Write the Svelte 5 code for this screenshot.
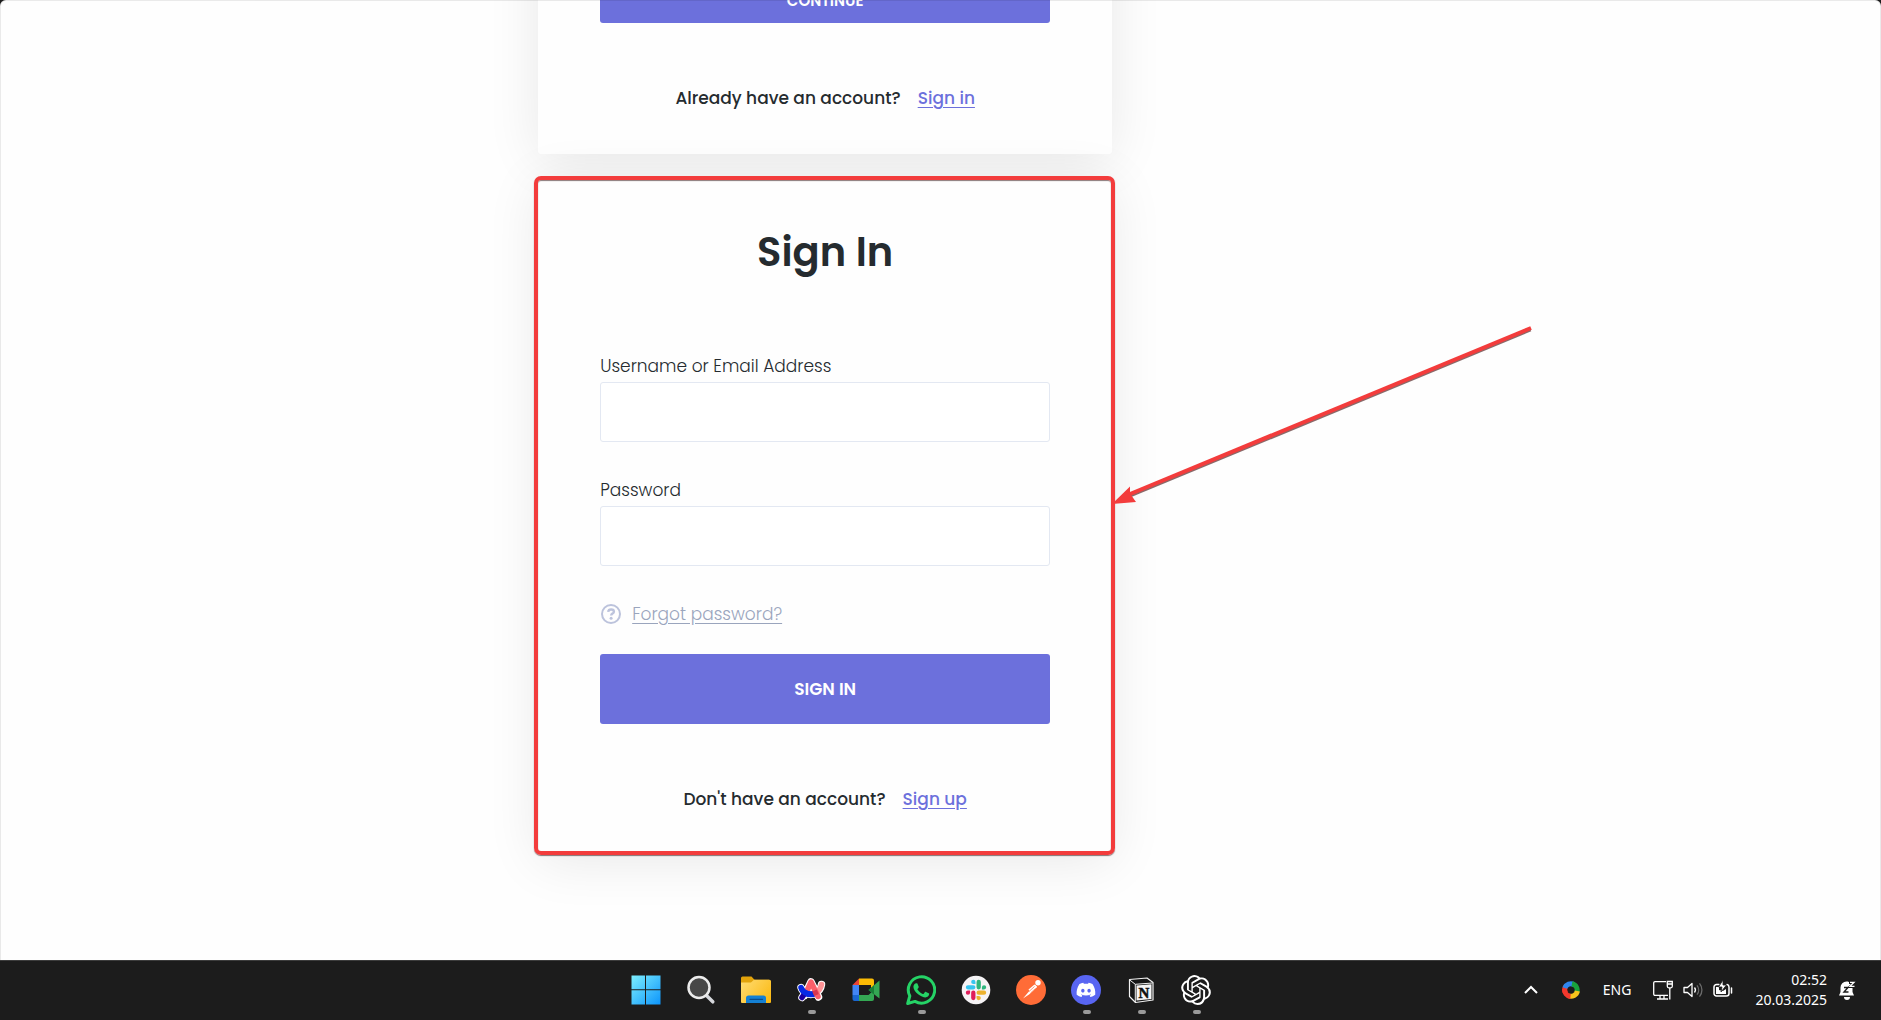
<script>
  let username = $state("");
  let password = $state("");

  const apps = [
    { id: "start", label: "Start", running: false },
    { id: "search", label: "Search", running: false },
    { id: "files", label: "File Explorer", running: false },
    { id: "arc", label: "Arc", running: true },
    { id: "meet", label: "Google Meet", running: false },
    { id: "whatsapp", label: "WhatsApp", running: true },
    { id: "slack", label: "Slack", running: false },
    { id: "postman", label: "Postman", running: false },
    { id: "discord", label: "Discord", running: true },
    { id: "notion", label: "Notion", running: true },
    { id: "chatgpt", label: "ChatGPT", running: true },
  ];

  // Slack logo: one arm, turned four times
  const slackArms = [
    { color: "#e01e5a", turn: 0 },
    { color: "#36c5f0", turn: 90 },
    { color: "#2eb67d", turn: 180 },
    { color: "#ecb22e", turn: 270 },
  ];
</script>

<div class="desktop">
  <main class="page">
    <div class="cards">
      <section class="card">
        <button type="button" class="submit small">Continue</button>
        <p class="switch">
          Already have an account? <a href="#signin">Sign in</a>
        </p>
      </section>

      <section class="card" id="signin">
        <h1>Sign In</h1>
        <form onsubmit={(e) => e.preventDefault()}>
          <div class="field">
            <label for="username">Username or Email Address</label>
            <input id="username" type="text" bind:value={username} />
          </div>
          <div class="field">
            <label for="password">Password</label>
            <input id="password" type="password" bind:value={password} />
          </div>
          <div class="forgot">
            <svg viewBox="0 0 22 22" aria-hidden="true">
              <circle cx="11" cy="11" r="9" fill="none" stroke="#bcc3dc" stroke-width="2" />
              <path d="M8.2 8.8c.2-1.6 1.3-2.3 2.9-2.3 1.7 0 2.8.9 2.8 2.2 0 1.9-2.7 1.9-2.7 3.7" fill="none" stroke="#bcc3dc" stroke-width="2.4" />
              <circle cx="11.1" cy="15.2" r="1.5" fill="#bcc3dc" />
            </svg>
            <a href="#forgot">Forgot password?</a>
          </div>
          <button type="submit" class="submit">Sign in</button>
        </form>
        <p class="switch">
          Don't have an account? <a href="#signup">Sign up</a>
        </p>

        <div class="marker"></div>
        <svg class="arrow" viewBox="0 0 424 184" aria-hidden="true">
          <path d="M418.5 6.500 18 172.500" stroke="#8a6a6a" stroke-width="4" />
          <path d="M419 5 18 171" stroke="#f33c3c" stroke-width="4" />
          <path d="M0 181 18 163.500v7l6 8.500z" fill="#f33c3c" />
        </svg>
      </section>
    </div>
  </main>

  <footer class="taskbar">
    <nav class="apps">
      {#each apps as app}
        <button type="button" class="app" class:running={app.running} aria-label={app.label}>
          <svg viewBox="0 0 30 30">
            {#if app.id === "start"}
              <defs>
                <linearGradient id="win" x1="0" y1="0" x2="30" y2="30" gradientUnits="userSpaceOnUse">
                  <stop offset="0" stop-color="#7ff0fe" />
                  <stop offset="1" stop-color="#0a93fb" />
                </linearGradient>
              </defs>
              <path d="M.5.5H14v13.800H.5zM15 .5h14.500v13.800H15zM.5 15.300H14v14.200H.5zM15 15.300h14.500v14.200H15z" fill="url(#win)" />
            {:else if app.id === "search"}
              <path d="m20.500 20.500 6.300 6.300" stroke="#d6d8dc" stroke-width="3.500" stroke-linecap="round" />
              <circle cx="13" cy="12.500" r="10.500" fill="#484848" stroke="#ececec" stroke-width="2.500" />
            {:else if app.id === "files"}
              <defs>
                <linearGradient id="folder" x1="0" y1="5" x2="30" y2="28" gradientUnits="userSpaceOnUse">
                  <stop offset="0" stop-color="#ffdc73" />
                  <stop offset="1" stop-color="#fbb80e" />
                </linearGradient>
              </defs>
              <path d="M0 3a1.500 1.500 0 0 1 1.500-1.500h9l3 3.200H28V12H0z" fill="#e2a30b" />
              <path d="M0 7.500h10l3-2.800h15.500A1.500 1.500 0 0 1 30 6.200V27a1 1 0 0 1-1 1H1a1 1 0 0 1-1-1z" fill="url(#folder)" />
              <path d="M5 28v-5a2.500 2.500 0 0 1 2.500-2.500h15A2.500 2.500 0 0 1 25 23v5z" fill="#1480d4" />
              <path d="M9 24.300h12.500" stroke="#0a4c8c" stroke-width="1.300" stroke-linecap="round" />
            {:else if app.id === "arc"}
              <g fill="none" stroke-linecap="round" stroke-linejoin="round">
                <path d="M5 12.500c1.500 5 8 8.500 14 6 4-2 6-5.500 6.500-9M6 22.500l2-3M8.500 20.500 15 7l7.500 15" stroke="#fff" stroke-width="7.500" />
                <path d="M25.500 9.500c-.8 4-3 7-6.500 9" stroke="#ff9396" stroke-width="5.500" />
                <path d="M5 12.500c2 6 7 8 13 6.500" stroke="#0629e4" stroke-width="5.500" />
                <path d="M10.500 17 15 7l7 14.500" stroke="#fc5f6a" stroke-width="5.500" />
                <path d="M6 22.500 8 19.500" stroke="#1b00a0" stroke-width="5.500" />
                <path d="M5 12.500c1.500 4 5 7 12 6.500" stroke="#0629e4" stroke-width="5.500" stroke-linecap="butt" />
                <path d="M18.500 15.500 20.500 20" stroke="#d9364f" stroke-width="5" stroke-linecap="butt" />
              </g>
            {:else if app.id === "meet"}
              <path d="M1.500 10 8 3.500V10z" fill="#ea4335" />
              <path d="M8 3.500h13a2 2 0 0 1 2 2V10l-3 5v-5H8z" fill="#fbbc04" />
              <path d="M1.500 10H8v10H1.500z" fill="#4285f4" />
              <path d="M1.500 20H8v6H3.500a2 2 0 0 1-2-2z" fill="#1967d2" />
              <path d="M8 20h9.500l5.500-5v9a2 2 0 0 1-2 2H8z" fill="#34a853" />
              <path d="m17.500 15 11-9.500v18z" fill="#34a853" />
              <path d="M17.500 15 23 10.200v9.600z" fill="#188038" />
            {:else if app.id === "whatsapp"}
              <path d="M1.700 28.500 3.800 21A13.200 13.200 0 1 1 9 26.400z" fill="none" stroke="#25d366" stroke-width="3" stroke-linejoin="round" />
              <path d="M10.500 8.200c.5 0 .8 0 1 .6l1.200 2.900c.2.500-.1.900-1.200 2.200-.2.300 0 .6.200.9 1.300 2 3 3.300 5.100 4.100.4.200.6.100.9-.2l1.300-1.600c.3-.3.600-.3 1-.1l2.700 1.300c.5.300.5.400.5.800-.1 2-1.900 3.300-3.800 3.300-3.700-.1-11.600-5-12-10.400-.1-1.800 1.100-3.800 3.100-3.800z" fill="#25d366" />
            {:else if app.id === "slack"}
              <circle cx="15" cy="15" r="14.300" fill="#f5f3f5" />
              <g transform="translate(4.800 4.800) scale(.85)">
                {#each slackArms as arm}
                  <path
                    transform="rotate({arm.turn} 12 12)"
                    fill={arm.color}
                    d="M5.042 15.165a2.528 2.528 0 0 1-2.520 2.523A2.528 2.528 0 0 1 0 15.165a2.527 2.527 0 0 1 2.522-2.520h2.520zM6.313 15.165a2.527 2.527 0 0 1 2.521-2.520 2.527 2.527 0 0 1 2.521 2.520v6.313A2.528 2.528 0 0 1 8.834 24a2.528 2.528 0 0 1-2.521-2.522z"
                  />
                {/each}
              </g>
            {:else if app.id === "postman"}
              <circle cx="15" cy="15" r="15" fill="#ff6c37" />
              <path d="m7 23.500 5.500-6.500 6.500-7.300 2 2-3.500 4-4.500 3.800z" fill="#fff" />
              <path d="m12.500 14.500 6-5 2.500 2.500-6.500 5.500z" fill="#fff" />
              <path d="m13 16.500 5.500-5M14.500 18l5-4.500" stroke="#ff6c37" stroke-width=".7" />
              <circle cx="22" cy="7.800" r="2.700" fill="#fff" />
            {:else if app.id === "discord"}
              <circle cx="15" cy="15" r="15" fill="#5865f2" />
              <g transform="translate(5.600 5.600) scale(.78)">
                <path
                  fill="#fff"
                  d="M20.317 4.370a19.791 19.791 0 00-4.885-1.515.074.074 0 00-.079.037c-.211.375-.445.865-.608 1.250-1.845-.276-3.680-.276-5.487 0-.164-.393-.406-.874-.618-1.250a.077.077 0 00-.079-.037 19.736 19.736 0 00-4.885 1.515.07.07 0 00-.032.028C.533 9.046-.319 13.580.099 18.058a.082.082 0 00.031.056c2.053 1.508 4.041 2.423 5.993 3.029a.078.078 0 00.084-.028c.462-.630.873-1.295 1.226-1.994a.076.076 0 00-.042-.106c-.653-.248-1.274-.550-1.872-.892a.077.077 0 01-.008-.128c.126-.094.252-.192.372-.291a.074.074 0 01.078-.011c3.928 1.793 8.180 1.793 12.061 0a.074.074 0 01.079.010c.120.099.246.198.373.292a.077.077 0 01-.007.128 12.299 12.299 0 01-1.873.891.077.077 0 00-.041.107c.360.698.772 1.363 1.225 1.993a.076.076 0 00.084.029c1.961-.607 3.950-1.522 6.002-3.029a.077.077 0 00.031-.055c.500-5.177-.838-9.674-3.549-13.660a.061.061 0 00-.031-.029zM8.020 15.331c-1.183 0-2.157-1.086-2.157-2.419 0-1.333.956-2.419 2.157-2.419 1.211 0 2.176 1.095 2.157 2.419 0 1.333-.956 2.419-2.157 2.419zm7.975 0c-1.183 0-2.157-1.086-2.157-2.419 0-1.333.955-2.419 2.157-2.419 1.211 0 2.176 1.095 2.157 2.419 0 1.333-.946 2.419-2.157 2.419z"
                />
              </g>
            {:else if app.id === "notion"}
              <path d="M3.500 4.500 21 3l6 4.500V25L9.500 27.500l-6-6z" fill="#161616" stroke="#f2f2f2" stroke-width="1.200" stroke-linejoin="round" />
              <path d="M4 5.200 9.300 9.300 26.500 8M9.300 9.300V27" fill="none" stroke="#f2f2f2" stroke-width="1" />
              <path d="M10.500 10.500 25.500 9.300v14.600l-15 1.600z" fill="#f6f6f6" />
              <text x="18" y="22.500" text-anchor="middle" font-family="Liberation Serif, serif" font-weight="700" font-size="15" fill="#111" stroke="#111" stroke-width=".5">N</text>
            {:else}
              <g transform="scale(1.240) translate(.1 .1)">
                <path
                  fill="#fff"
                  d="M22.282 9.821a5.985 5.985 0 0 0-.516-4.911 6.046 6.046 0 0 0-6.510-2.900A6.065 6.065 0 0 0 4.981 4.182a5.985 5.985 0 0 0-3.998 2.900 6.046 6.046 0 0 0 .743 7.097 5.980 5.980 0 0 0 .511 4.911 6.051 6.051 0 0 0 6.515 2.900A5.985 5.985 0 0 0 13.260 24a6.056 6.056 0 0 0 5.772-4.206 5.989 5.989 0 0 0 3.998-2.900 6.056 6.056 0 0 0-.748-7.073zM13.260 22.429a4.476 4.476 0 0 1-2.876-1.041l.142-.080 4.778-2.758a.795.795 0 0 0 .393-.681v-6.737l2.020 1.169a.071.071 0 0 1 .038.052v5.583a4.504 4.504 0 0 1-4.495 4.494zM3.599 18.304a4.471 4.471 0 0 1-.535-3.014l.142.085 4.783 2.758a.771.771 0 0 0 .781 0l5.843-3.369v2.332a.080.080 0 0 1-.033.062L9.740 19.950a4.499 4.499 0 0 1-6.141-1.646zM2.341 7.896a4.485 4.485 0 0 1 2.366-1.973V11.600a.766.766 0 0 0 .388.677l5.814 3.354-2.020 1.169a.076.076 0 0 1-.071 0l-4.830-2.787A4.504 4.504 0 0 1 2.341 7.872zM18.937 11.751 13.104 8.364 15.119 7.200a.076.076 0 0 1 .071 0l4.830 2.791a4.494 4.494 0 0 1-.677 8.104v-5.677a.790.790 0 0 0-.407-.667zM20.948 8.728l-.142-.085-4.774-2.782a.776.776 0 0 0-.785 0L9.409 9.230V6.897a.066.066 0 0 1 .028-.062l4.830-2.787a4.499 4.499 0 0 1 6.680 4.660zM8.307 12.863l-2.020-1.164a.080.080 0 0 1-.038-.057V6.074a4.499 4.499 0 0 1 7.376-3.454l-.142.081L8.704 5.459a.795.795 0 0 0-.393.681zM9.404 10.498l2.602-1.500 2.607 1.500v2.999l-2.597 1.500-2.607-1.500z"
                />
              </g>
            {/if}
          </svg>
        </button>
      {/each}
    </nav>

    <div class="tray">
      <button type="button" class="tray-item" aria-label="Show hidden icons">
        <svg width="16" height="20" viewBox="0 0 16 20"><path d="m2 13 6-6 6 6" fill="none" stroke="#fff" stroke-width="2" /></svg>
      </button>
      <button type="button" class="tray-item" aria-label="Capture">
        <svg width="20" height="20" viewBox="0 0 20 20">
          <g fill="none" stroke-width="5">
            <path d="M4.500 13A6.300 6.300 0 0 1 5 6" stroke="#f2382d" />
            <path d="M3.800 8A6.500 6.500 0 0 1 13 4.500" stroke="#2f86ee" />
            <path d="M11 3.700A6.500 6.500 0 0 1 15.500 13" stroke="#18a33c" />
            <path d="M16.400 11A6.500 6.500 0 0 1 7.500 15.800" stroke="#f8c51c" />
            <path d="M9.500 16.400A6.500 6.500 0 0 1 3.700 9" stroke="#f2382d" />
          </g>
        </svg>
      </button>
      <button type="button" class="tray-item">ENG</button>
      <button type="button" class="tray-item status" aria-label="Network, volume, battery">
        <svg width="20" height="22" viewBox="0 0 20 22">
          <g fill="none" stroke="#fff" stroke-width="1.300">
            <path d="M13 2.700H2a1.300 1.300 0 0 0-1.300 1.300v11A1.300 1.300 0 0 0 2 16.300h13M7 16.500v3M11 16.500v3M4 20h11" />
            <path d="M14.300 2.500h5v4.800a1.500 1.500 0 0 1-1.500 1.500h-2a1.500 1.500 0 0 1-1.500-1.500zM14.500 5h5M16.800 9v11.500" />
          </g>
        </svg>
        <svg width="20" height="22" viewBox="0 0 20 22">
          <path d="M1 8.500h3.500L9 4.500v13l-4.500-4H1z" fill="none" stroke="#fff" stroke-width="1.300" stroke-linejoin="round" />
          <path d="M11.500 8.500a4 4 0 0 1 0 5" fill="none" stroke="#fff" stroke-width="1.300" />
          <path d="M14 6.300a7.500 7.500 0 0 1 0 9.400M16.500 4.300a10.500 10.500 0 0 1 0 13.400" fill="none" stroke="#6b6b6b" stroke-width="1.300" />
        </svg>
        <svg width="20" height="22" viewBox="0 0 20 22">
          <path d="M6 5.500H3.500a2.500 2.500 0 0 0-2.500 2.500v6.500A2.500 2.500 0 0 0 3.500 17h10a2.500 2.500 0 0 0 2.500-2.500V8a2.500 2.500 0 0 0-2-2.400M18.500 9v5" fill="none" stroke="#fff" stroke-width="1.500" stroke-linecap="round" />
          <path d="M3 8h3v3l4 1 3-2v5H3z" fill="#fff" />
          <path d="M10 1 5.500 8H9l-1 5 5.500-7H10z" fill="#fff" stroke="#1c1c1c" stroke-width=".8" />
        </svg>
      </button>
      <button type="button" class="tray-item datetime">
        <span class="clock">
          <time>02:52</time>
          <time datetime="2025-03-20">20.03.2025</time>
        </span>
        <svg width="18" height="22" viewBox="0 0 18 22">
          <path d="M1 16.500 2.500 13V8.500a6 6 0 0 1 6-6c3.500 0 6 2.500 6 6V13l1.500 3.500z" fill="#fff" />
          <path d="M6 18h6a3 3 0 0 1-6 0z" fill="#fff" />
          <path d="M11 3.500h5.500l-4 4h4.500" fill="none" stroke="#1c1c1c" stroke-width="3" />
          <path d="M6 8.500h4l-4 4.500h4.500" fill="none" stroke="#1c1c1c" stroke-width="1.400" />
          <path d="M12 3.300h4l-4 4h4.500" fill="none" stroke="#fff" stroke-width="1.300" />
        </svg>
      </button>
    </div>
  </footer>
</div>

<style>
:global(body) {
  background: #1c1c1c;
}

.desktop {
  display: flex;
  flex-direction: column;
  height: 100vh;
  font-family: Poppins, Inter, sans-serif;
  color: #252b2f;
}

button {
  font-family: inherit;
  border: 0;
  cursor: pointer;
}

/* the page is scrolled to its end, so the cards sit at the bottom */
.page {
  position: relative;
  flex: 1;
  min-height: 0;
  display: flex;
  flex-direction: column;
  justify-content: flex-end;
  box-sizing: border-box;
  padding-bottom: 105px;
  overflow: hidden;
  background: #fefefe;
  border-radius: 6px 6px 0 0;
}

.page::after {
  content: "";
  position: absolute;
  inset: 0;
  border: 1px solid rgba(0, 0, 0, 0.08);
  border-bottom: 0;
  border-radius: 6px 6px 0 0;
  pointer-events: none;
}

.cards {
  display: grid;
  grid-template-columns: 7fr minmax(auto, 574px) 10fr;
  row-gap: 24px;
}

.card {
  grid-column: 2;
  position: relative;
  box-sizing: border-box;
  padding: 44px 62px;
  background: #fefefe;
  border-radius: 3px;
  box-shadow: 0 6px 54px rgba(0, 0, 0, 0.09);
}

h1 {
  margin: 0 0 72px;
  font-size: 40px;
  line-height: 60px;
  font-weight: 600;
  text-align: center;
}

.field {
  display: flex;
  flex-direction: column;
  gap: 4px;
  margin-bottom: 36px;
}

label {
  font-size: 17px;
  line-height: 24px;
  font-weight: 300;
}

input {
  box-sizing: border-box;
  width: 100%;
  height: 60px;
  padding: 0 20px;
  border: 1px solid #e3e8f2;
  border-radius: 3px;
  background: #fff;
  font-family: inherit;
  font-size: 17px;
}

.forgot {
  display: flex;
  align-items: center;
  gap: 10px;
  height: 24px;
  margin-bottom: 28px;
  font-size: 17px;
  line-height: 24px;
  font-weight: 300;
}

.forgot svg {
  width: 22px;
  height: 22px;
}

.forgot a {
  color: #9aa5bd;
  text-underline-offset: 3px;
}

.submit {
  display: block;
  width: 100%;
  height: 70px;
  border-radius: 3px;
  background: #6c70dc;
  color: #fff;
  font-size: 17px;
  font-weight: 600;
  text-transform: uppercase;
}

.small {
  height: 46px;
  font-size: 15px;
}

.switch {
  display: flex;
  justify-content: center;
  gap: 17px;
  margin: 63px 0 0;
  font-size: 17px;
  line-height: 24px;
  font-weight: 500;
}

.switch a {
  color: #6c70dc;
  text-underline-offset: 3px;
}

.marker {
  position: absolute;
  inset: -2px -3px 0 -4px;
  border: 4px solid #f33c3c;
  border-radius: 7px;
  box-shadow: 0 1px 1px rgba(60, 30, 30, 0.6), inset 0 1px 1px rgba(60, 30, 30, 0.6);
  pointer-events: none;
}

.arrow {
  position: absolute;
  top: 145px;
  left: 100%;
  width: 424px;
  height: 184px;
  pointer-events: none;
}

.taskbar {
  display: grid;
  grid-template-columns: 32fr auto 34fr;
  height: 60px;
  background: #1c1c1c;
  box-shadow: inset 0 1px #3c3c3c;
  color: #fff;
  font-family: "Segoe UI", "Noto Sans", sans-serif;
}

.apps {
  grid-column: 2;
  display: flex;
}

.app {
  position: relative;
  width: 55px;
  padding: 0;
  background: none;
}

.app svg {
  display: block;
  width: 30px;
  height: 30px;
  margin: 0 auto;
}

.running::after {
  content: "";
  position: absolute;
  bottom: 6px;
  left: 24px;
  width: 8px;
  height: 4px;
  border-radius: 2px;
  background: #9a9a9a;
}

.tray {
  display: flex;
  justify-content: flex-end;
  align-items: center;
  padding-right: 25px;
  gap: 22px;
}

.tray-item {
  display: flex;
  align-items: center;
  padding: 0;
  background: none;
  color: #fff;
  font-size: 14px;
  line-height: 20px;
}

.status {
  gap: 10px;
}

.datetime {
  gap: 11px;
}

.clock {
  display: flex;
  flex-direction: column;
  align-items: flex-end;
}
</style>
